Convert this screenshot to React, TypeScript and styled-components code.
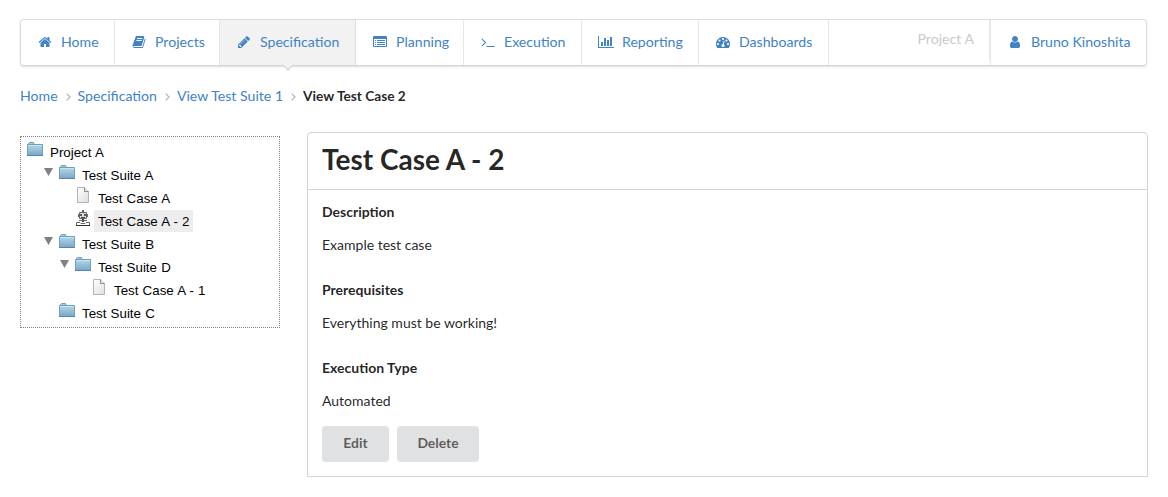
import React from "react";
import styled, { createGlobalStyle } from "styled-components";

const GlobalStyle = createGlobalStyle`
  *, *::before, *::after { box-sizing: border-box; }
  body {
    margin: 0;
    background: #fff;
    font-family: Lato, "Liberation Sans", sans-serif;
    font-size: 14px;
    line-height: 20px;
    color: rgba(0, 0, 0, 0.87);
  }
`;

const Page = styled.div`
  padding: 19px 20px 0;
`;

const Menu = styled.nav`
  display: flex;
  width: 1127px;
  height: 47px;
  border: 1px solid #dcddde;
  border-bottom-color: #d4d4d5;
  border-radius: 4px;
  box-shadow: 0 1px 2px 0 rgba(34, 36, 38, 0.15);
  font-size: 14.12px;
`;

const MenuItem = styled.a<{ $width: number; $active?: boolean; $last?: boolean }>`
  position: relative;
  display: flex;
  align-items: center;
  width: ${(p) => p.$width}px;
  padding: 0 0 1px 16px;
  color: #4183c4;
  background: ${(p) => (p.$active ? "#f2f2f2" : "transparent")};
  border-right: ${(p) => (p.$last ? "0" : `1px solid ${p.$active ? "#dcdcdc" : "#e8e8e9"}`)};
  white-space: nowrap;
`;

const Pointer = styled.span`
  position: absolute;
  left: 50%;
  top: 100%;
  width: 8px;
  height: 8px;
  margin: -4px 0 0 -4px;
  background: #f2f2f2;
  border: solid #d4d4d5;
  border-width: 0 1px 1px 0;
  transform: rotate(45deg);
`;

const IconBox = styled.span`
  display: flex;
  justify-content: center;
  width: 16px;
  margin-right: 8px;
  svg { display: block; fill: currentColor; flex: none; }
`;

const CurrentProject = styled.div`
  margin-left: auto;
  height: 40px;
  padding: 9px 15px 0;
  color: #cacaca;
  border-right: 1px solid #e8e8e9;
`;

const UserArea = styled.div`
  display: flex;
  border-left: 1px solid #e8e8e9;
`;

const Breadcrumb = styled.div`
  display: flex;
  align-items: center;
  height: 20px;
  margin-top: 20px;
`;

const Crumb = styled.a`
  color: #4183c4;
  font-size: 14.12px;
`;

const CurrentCrumb = styled.span`
  font-size: 13.7px;
  font-weight: 700;
`;

const Divider = styled.svg`
  display: block;
  width: 5px;
  height: 8px;
  margin: 2px 7px 0 8px;
  fill: none;
  stroke: #b4b4b4;
  stroke-width: 1.2;
`;

const Columns = styled.div`
  display: flex;
  align-items: flex-start;
  gap: 27px;
  margin-top: 26px;
`;

const Tree = styled.div`
  width: 260px;
  height: 192px;
  margin-top: 4px;
  padding: 4px 6px 0;
  border: 1px dotted gray;
  font-family: "Liberation Sans", Arial, sans-serif;
  font-size: 13.33px;
  word-spacing: 0.45px;
  color: #000;
`;

const TreeRow = styled.div<{ $indent: number }>`
  display: flex;
  height: 23px;
  padding-left: ${(p) => p.$indent}px;
`;

const Expander = styled.span`
  width: 16px;
  padding: 4px 0 0 1px;
  svg { display: block; }
`;

const NodeIcon = styled.span`
  width: 16px;
  height: 16px;
  margin-right: 3px;
  svg { display: block; }
`;

const NodeLabel = styled.span<{ $selected?: boolean }>`
  height: 22px;
  padding: 1px 4px 0;
  line-height: 22px;
  background: ${(p) => (p.$selected ? "#ededed" : "transparent")};
  white-space: nowrap;
`;

const Panel = styled.section`
  width: 841px;
  height: 345px;
  border: 1px solid #d4d4d5;
  border-radius: 4px 4px 0 0;
`;

const PanelHeader = styled.header`
  height: 57px;
  padding: 8px 14px 0;
  border-bottom: 1px solid #d4d4d5;
`;

const Title = styled.h1`
  margin: 0;
  font-size: 28px;
  line-height: 36px;
  font-weight: 700;
`;

const PanelBody = styled.div`
  padding: 12px 14px;
`;

const FieldName = styled.h2`
  margin: 0 0 13px;
  font-size: 14px;
  line-height: 20px;
  font-weight: 700;
`;

const FieldValue = styled.p`
  margin: 0 0 25px;
`;

const Actions = styled.div`
  display: flex;
  gap: 8px;
  margin-top: -10px;
`;

const Button = styled.button<{ $width: number }>`
  width: ${(p) => p.$width}px;
  height: 36px;
  padding: 0 0 3px;
  border: 0;
  border-radius: 4px;
  background: #e0e1e2;
  color: rgba(0, 0, 0, 0.6);
  font: 700 13.9px Lato, sans-serif;
`;

const glyphs = {
  home: "M1472 992v480q0 26-19 45t-45 19h-384v-384h-256v384h-384q-26 0-45-19t-19-45v-480q0-1 .5-3t.5-3l575-474 575 474q1 2 1 6zm223-69l-62 74q-8 9-21 11h-3q-13 0-21-7l-692-577-692 577q-12 8-24 7-13-2-21-11l-62-74q-8-10-7-23.5t11-21.5l719-599q32-26 76-26t76 26l244 204v-195q0-14 9-23t23-9h192q14 0 23 9t9 23v408l219 182q10 8 11 21.5t-7 23.5z",
  book: "M1703 478q40 57 18 129l-275 906q-19 64-76.5 107.5t-122.5 43.5h-923q-77 0-148.5-53.5t-99.5-131.5q-24-67-2-127 0-4 3-27t4-37q1-8-3-21.5t-3-19.5q2-11 8-21t16.5-23.5 16.5-23.5q23-38 45-91.5t30-91.5q3-10 .5-30t-.5-28q3-11 17-28t17-23q21-36 42-92t25-90q1-9-2.5-32t.5-28q4-13 22-30.5t22-22.5q19-26 42.5-84.5t27.5-96.5q1-8-3-25.5t-2-26.5q2-8 9-18t18-23 17-21q8-12 16.5-30.5t15-35 16-36 19.5-32 26.5-23.5 36-11.5 47.5 5.5l-1 3q38-9 51-9h761q74 0 114 56t18 130l-274 906q-36 119-71.5 153.5t-128.5 34.5h-869q-27 0-38 15-11 16-1 43 24 70 144 70h923q29 0 56-15.5t35-41.5l300-987q7-22 5-57 38 15 59 43zm-1064 2q-4 13 2 22.5t20 9.5h608q13 0 25.5-9.5t16.5-22.5l21-64q4-13-2-22.5t-20-9.5h-608q-13 0-25.5 9.5t-16.5 22.5zm-83 256q-4 13 2 22.5t20 9.5h608q13 0 25.5-9.5t16.5-22.5l21-64q4-13-2-22.5t-20-9.5h-608q-13 0-25.5 9.5t-16.5 22.5z",
  pencil: "M491 1536l91-91-235-235-91 91v107h128v128h107zm523-928q0-22-22-22-10 0-17 7l-542 542q-7 7-7 17 0 22 22 22 10 0 17-7l542-542q7-7 7-17zm-54-192l416 416-832 832h-416v-416zm683 96q0 53-37 90l-166 166-416-416 166-165q36-38 90-38 53 0 91 38l235 234q37 39 37 91z",
  list: "M160 128h1472q160 0 160 160v1088q0 160-160 160h-1472q-160 0-160-160v-1088q0-160 160-160zM128 512v864q0 32 32 32h1472q32 0 32-32v-864zM256 640h128v128h-128zM512 640h1024v128h-1024zM256 896h128v128h-128zM512 896h1024v128h-1024zM256 1152h128v128h-128zM512 1152h1024v128h-1024z",
  terminal: "M649 983l-466 466q-10 10-23 10t-23-10l-50-50q-10-10-10-23t10-23l393-393-393-393q-10-10-10-23t10-23l50-50q10-10 23-10t23 10l466 466q10 10 10 23t-10 23zm1079 457v64q0 14-9 23t-23 9h-960q-14 0-23-9t-9-23v-64q0-14 9-23t23-9h960q14 0 23 9t9 23z",
  chart: "M640 896v512h-256v-512h256zm384-512v1024h-256v-1024h256zm1024 1152v128h-2048v-1536h128v1408h1920zm-640-896v768h-256v-768h256zm384-384v1152h-256v-1152h256z",
  gauge: "M384 1152q0-53-37.5-90.5t-90.5-37.5-90.5 37.5-37.5 90.5 37.5 90.5 90.5 37.5 90.5-37.5 37.5-90.5zm192-448q0-53-37.5-90.5t-90.5-37.5-90.5 37.5-37.5 90.5 37.5 90.5 90.5 37.5 90.5-37.5 37.5-90.5zm428 481l101-382q6-26-7.5-48.5t-38.5-29.5-48 6.5-30 39.5l-101 382q-60 5-107 43.5t-63 98.5q-20 77 20 146t117 89 146-20 89-117q16-60-6-117t-72-91zm660-33q0-53-37.5-90.5t-90.5-37.5-90.5 37.5-37.5 90.5 37.5 90.5 90.5 37.5 90.5-37.5 37.5-90.5zm-640-640q0-53-37.5-90.5t-90.5-37.5-90.5 37.5-37.5 90.5 37.5 90.5 90.5 37.5 90.5-37.5 37.5-90.5zm448 192q0-53-37.5-90.5t-90.5-37.5-90.5 37.5-37.5 90.5 37.5 90.5 90.5 37.5 90.5-37.5 37.5-90.5zm320 448q0 261-141 483-19 29-54 29h-1402q-35 0-54-29-141-221-141-483 0-182 71-348t191-286 286-191 348-71 348 71 286 191 191 286 71 348z",
  user: "M1536 1399q0 109-62.5 187t-150.5 78h-854q-88 0-150.5-78t-62.5-187q0-85 8.5-160.5t31.5-152 58.5-131 94-89 134.5-34.5q131 128 313 128t313-128q76 0 134.5 34.5t94 89 58.5 131 31.5 152 8.5 160.5zm-256-887q0 159-112.5 271.5t-271.5 112.5-271.5-112.5-112.5-271.5 112.5-271.5 271.5-112.5 271.5 112.5 112.5 271.5z",
};

type GlyphName = keyof typeof glyphs;

function Glyph({ name }: { name: GlyphName }) {
  const units = name === "chart" ? 2048 : 1792;
  return (
    <IconBox>
      <svg width={units / 128} height="14" viewBox={`0 0 ${units} 1792`}>
        <path d={glyphs[name]} fillRule={name === "list" ? "evenodd" : "nonzero"} />
      </svg>
    </IconBox>
  );
}

const Folder = () => (
  <svg width="16" height="16" viewBox="0 0 16 16">
    <defs>
      <linearGradient id="folderFill" x1="0" y1="0" x2="0" y2="1">
        <stop offset="0" stopColor="#b9d7e8" />
        <stop offset="1" stopColor="#77a7c7" />
      </linearGradient>
    </defs>
    <path d="M1.5 4V2.5L2.5 1.5H6.5L7.5 3.5" fill="#a5cbe0" stroke="#6d9fbe" />
    <path d="M.5 3.5H15.5V14.5H.5Z" fill="url(#folderFill)" stroke="#6d9fbe" />
    <path d="M1 4.5H15" stroke="#cbe3ef" />
    <path d="M0 14.5H16" stroke="#5686a5" />
  </svg>
);

const Sheet = () => (
  <svg width="16" height="16" viewBox="0 0 16 16">
    <defs>
      <linearGradient id="sheetFill" x1="0" y1="0" x2="1" y2="1">
        <stop offset="0" stopColor="#fff" />
        <stop offset="1" stopColor="#dedede" />
      </linearGradient>
    </defs>
    <path d="M2.5 .5H9.5L13.5 4.5V15.5H2.5Z" fill="url(#sheetFill)" stroke="#b4b4b4" />
    <path d="M9.5 .5V4.5H13.5" fill="#eee" stroke="#8b8b8b" />
  </svg>
);

const Robot = () => (
  <svg width="16" height="16" viewBox="0 0 16 16" fill="none" stroke="#666">
    <path d="M8 0V2" strokeWidth="2" />
    <path d="M4.5 2.5H11.5V8.5H4.5Z" fill="#ddd" />
    <path d="M3.5 4V7M12.5 4V7" />
    <path d="M6 4V6M10 4V6" stroke="#222" strokeWidth="1.4" />
    <path d="M6 7.5H10" stroke="#444" />
    <path d="M8 9V12" stroke="#444" strokeWidth="2" />
    <path d="M4 10.5H12" />
    <path d="M1.5 12.5H5L6 13.5H10L11 12.5H14.5V15.5H1.5Z" fill="#fff" />
    <path d="M1 15.5H15" stroke="#333" />
  </svg>
);

const icons = { folder: Folder, sheet: Sheet, robot: Robot };

const menu: { icon: GlyphName; label: string; width: number; active?: boolean }[] = [
  { icon: "home", label: "Home", width: 94 },
  { icon: "book", label: "Projects", width: 105 },
  { icon: "pencil", label: "Specification", width: 136, active: true },
  { icon: "list", label: "Planning", width: 108 },
  { icon: "terminal", label: "Execution", width: 118 },
  { icon: "chart", label: "Reporting", width: 117 },
  { icon: "gauge", label: "Dashboards", width: 130 },
];

const nodes: {
  label: string;
  icon: keyof typeof icons;
  indent: number;
  open?: boolean;
  selected?: boolean;
}[] = [
  { label: "Project A", icon: "folder", indent: 0 },
  { label: "Test Suite A", icon: "folder", indent: 16, open: true },
  { label: "Test Case A", icon: "sheet", indent: 48 },
  { label: "Test Case A - 2", icon: "robot", indent: 48, selected: true },
  { label: "Test Suite B", icon: "folder", indent: 16, open: true },
  { label: "Test Suite D", icon: "folder", indent: 32, open: true },
  { label: "Test Case A - 1", icon: "sheet", indent: 64 },
  { label: "Test Suite C", icon: "folder", indent: 32 },
];

const fields = [
  ["Description", "Example test case"],
  ["Prerequisites", "Everything must be working!"],
  ["Execution Type", "Automated"],
];

const Chevron = () => (
  <Divider viewBox="0 0 5 8">
    <path d="M.7 .7L4 4L.7 7.3" />
  </Divider>
);

export default function App() {
  return (
    <Page>
      <GlobalStyle />
      <Menu>
        {menu.map((m) => (
          <MenuItem key={m.label} $width={m.width} $active={m.active}>
            <Glyph name={m.icon} />
            {m.label}
            {m.active && <Pointer />}
          </MenuItem>
        ))}
        <CurrentProject>Project A</CurrentProject>
        <UserArea>
          <MenuItem $width={155} $last>
            <Glyph name="user" />
            Bruno Kinoshita
          </MenuItem>
        </UserArea>
      </Menu>
      <Breadcrumb>
        <Crumb>Home</Crumb>
        <Chevron />
        <Crumb>Specification</Crumb>
        <Chevron />
        <Crumb>View Test Suite 1</Crumb>
        <Chevron />
        <CurrentCrumb>View Test Case 2</CurrentCrumb>
      </Breadcrumb>
      <Columns>
        <Tree>
          {nodes.map((n) => {
            const Icon = icons[n.icon];
            return (
              <TreeRow key={n.label} $indent={n.indent}>
                {n.open && (
                  <Expander>
                    <svg width="9" height="8" viewBox="0 0 9 8">
                      <path d="M0 0H9L4.5 8Z" fill="#808080" />
                    </svg>
                  </Expander>
                )}
                <NodeIcon>
                  <Icon />
                </NodeIcon>
                <NodeLabel $selected={n.selected}>{n.label}</NodeLabel>
              </TreeRow>
            );
          })}
        </Tree>
        <Panel>
          <PanelHeader>
            <Title>Test Case A - 2</Title>
          </PanelHeader>
          <PanelBody>
            {fields.map(([name, value]) => (
              <React.Fragment key={name}>
                <FieldName>{name}</FieldName>
                <FieldValue>{value}</FieldValue>
              </React.Fragment>
            ))}
            <Actions>
              <Button $width={67}>Edit</Button>
              <Button $width={82}>Delete</Button>
            </Actions>
          </PanelBody>
        </Panel>
      </Columns>
    </Page>
  );
}
